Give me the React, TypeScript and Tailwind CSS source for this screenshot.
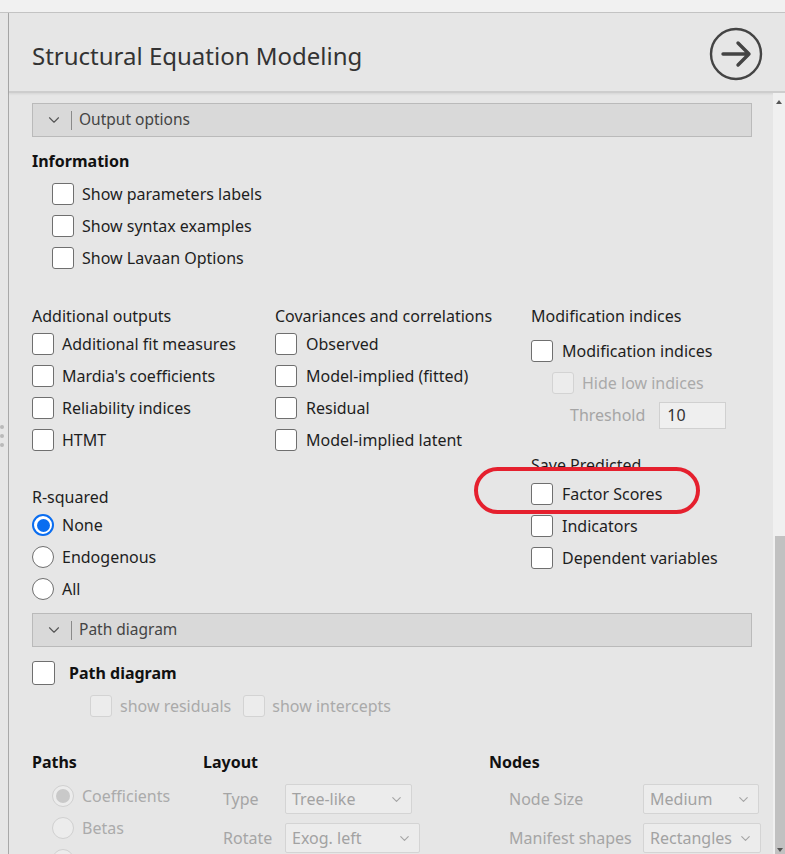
import { ChevronDown } from "lucide-react";

const font = { fontFamily: '"Noto Sans", "Open Sans", sans-serif' };

function Box({ disabled = false, big = false }: { disabled?: boolean; big?: boolean }) {
  return (
    <span
      className={`block shrink-0 rounded-[3px] border ${big ? "w-[23px] h-[24px]" : "w-[22px] h-[22px]"} ${
        disabled ? "border-[#d3d3d3] bg-[#ececec]" : "border-[#6f6f6f] bg-white"
      }`}
    />
  );
}

function Check({ label, disabled = false, gap = "gap-[8px]" }: { label: string; disabled?: boolean; gap?: string }) {
  return (
    <div className={`flex items-center h-[32px] ${gap}`}>
      <Box disabled={disabled} />
      <span className={`text-[16px] leading-none ${disabled ? "text-[#aaaaaa]" : "text-[#1e1e1e]"}`}>{label}</span>
    </div>
  );
}

function Radio({ label, checked = false, disabled = false }: { label: string; checked?: boolean; disabled?: boolean }) {
  return (
    <div className="flex items-center h-[32px] gap-[8px]">
      {checked ? (
        <span className="w-[22px] h-[22px] rounded-full border-2 border-[#0a6df0] bg-white flex items-center justify-center">
          <span className="w-[13px] h-[13px] rounded-full bg-[#0a6df0]" />
        </span>
      ) : disabled ? (
        <span className="w-[22px] h-[22px] rounded-full border border-[#d0d0d0] bg-[#ececec] flex items-center justify-center">
          {label === "Coefficients" && <span className="w-[14px] h-[14px] rounded-full bg-[#c9c9c9]" />}
        </span>
      ) : (
        <span className="w-[22px] h-[22px] rounded-full border border-[#6f6f6f] bg-white" />
      )}
      <span className={`text-[16px] leading-none ${disabled ? "text-[#ababab]" : "text-[#1e1e1e]"}`}>{label}</span>
    </div>
  );
}

function Section({ title }: { title: string }) {
  return (
    <div className="h-[34px] w-[720px] bg-[#d9d9d9] border border-[#bababa] flex items-center">
      <ChevronDown size={18} strokeWidth={1.5} className="ml-[12px] text-[#555]" />
      <span className="ml-[8px] w-px h-[19px] bg-[#8a8a8a]" />
      <span className="ml-[7px] text-[15.5px] text-[#444]">{title}</span>
    </div>
  );
}

function Select({ value, width }: { value: string; width: string }) {
  return (
    <div className={`${width} h-[30px] border border-[#d4d4d4] bg-[#ececec] rounded-[2px] flex items-center justify-between pl-[6px] pr-[7px]`}>
      <span className="text-[16px] text-[#a2a2a2]">{value}</span>
      <ChevronDown size={15} strokeWidth={1.8} className="text-[#a5a5a5]" />
    </div>
  );
}

export default function App() {
  return (
    <div className="relative w-[785px] h-[854px] overflow-hidden bg-[#e6e6e6]" style={font}>
      <div className="h-[13px] bg-[#f1f1f1] border-b border-[#c4c4c4]" />

      <div className="flex h-[841px]">
        {/* drag grip */}
        <div className="w-[8px] flex flex-col items-start pt-[412px] gap-[5px]">
          <span className="w-[4px] h-[4px] rounded-full bg-[#b9b9b9]" />
          <span className="w-[4px] h-[4px] rounded-full bg-[#b9b9b9]" />
          <span className="w-[4px] h-[4px] rounded-full bg-[#b9b9b9]" />
        </div>

        <div className="flex-1 flex flex-col border-l border-[#a8a8a8] min-w-0">
          {/* header */}
          <div className="h-[80px] shrink-0 flex items-center justify-between pl-[23px] pr-[22px] border-b-2 border-[#cdcdcd] shadow-[0_1px_2px_rgba(0,0,0,0.08)]">
            <h1 className="text-[24px] font-normal text-[#333] pt-[7px]">Structural Equation Modeling</h1>
            <svg width="54" height="54" viewBox="0 0 54 54" className="mt-[3px]">
              <circle cx="27" cy="27" r="25" fill="none" stroke="#444" strokeWidth="2.4" />
              <path d="M14 27h26M29 16l11 11-11 11" fill="none" stroke="#444" strokeWidth="3.4" strokeLinecap="round" strokeLinejoin="round" />
            </svg>
          </div>

          <div className="flex-1 flex min-h-0">
            <div className="flex-1 pl-[23px] pt-[10px]">
              <Section title="Output options" />

              <div className="mt-[12px] text-[16px] font-bold text-[#111] leading-[24px]">Information</div>
              <div className="pl-[20px] mt-[5px]">
                <Check label="Show parameters labels" />
                <Check label="Show syntax examples" />
                <Check label="Show Lavaan Options" />
              </div>

              <div className="flex mt-[30px]">
                <div className="w-[499px]">
                  <div className="flex">
                    <div className="w-[243px]">
                      <div className="text-[16px] leading-[24px] text-[#1e1e1e]">Additional outputs</div>
                      <Check label="Additional fit measures" />
                      <Check label="Mardia's coefficients" />
                      <Check label="Reliability indices" />
                      <Check label="HTMT" />
                    </div>
                    <div>
                      <div className="text-[16px] leading-[24px] text-[#1e1e1e]">Covariances and correlations</div>
                      <Check label="Observed" gap="gap-[9px]" />
                      <Check label="Model-implied (fitted)" gap="gap-[9px]" />
                      <Check label="Residual" gap="gap-[9px]" />
                      <Check label="Model-implied latent" gap="gap-[9px]" />
                    </div>
                  </div>
                  <div className="mt-[29px]">
                    <div className="text-[16px] leading-[24px] text-[#1e1e1e]">R-squared</div>
                    <Radio label="None" checked />
                    <Radio label="Endogenous" />
                    <Radio label="All" />
                  </div>
                </div>

                <div>
                  <div className="text-[16px] leading-[24px] text-[#1e1e1e]">Modification indices</div>
                  <div className="mt-[7px]">
                    <Check label="Modification indices" gap="gap-[9px]" />
                  </div>
                  <div className="pl-[21px]">
                    <Check label="Hide low indices" disabled />
                  </div>
                  <div className="flex items-center h-[32px] pl-[39px]">
                    <span className="text-[16px] text-[#a5a5a5]">Threshold</span>
                    <span className="ml-[14px] w-[67px] h-[27px] border border-[#d0d0d0] bg-[#efefef] text-[16px] text-[#333] pl-[7px] leading-[25px]">10</span>
                  </div>
                  <div className="mt-[22px] text-[16px] leading-[24px] text-[#1e1e1e]">Save Predicted</div>
                  <div className="mt-[1px]">
                    <Check label="Factor Scores" gap="gap-[9px]" />
                    <Check label="Indicators" gap="gap-[9px]" />
                    <Check label="Dependent variables" gap="gap-[9px]" />
                  </div>
                </div>
              </div>

              <div className="mt-[8px]">
                <Section title="Path diagram" />
              </div>

              <div className="flex items-center h-[32px] mt-[10px] gap-[14px]">
                <Box big />
                <span className="text-[16px] font-bold text-[#111]">Path diagram</span>
              </div>
              <div className="flex items-center h-[32px] mt-[1px] pl-[58px]">
                <Box disabled />
                <span className="ml-[8px] text-[16px] text-[#aaaaaa]">show residuals</span>
                <span className="ml-[12px]"><Box disabled /></span>
                <span className="ml-[7px] text-[16px] text-[#aaaaaa]">show intercepts</span>
              </div>

              <div className="flex mt-[28px]">
                <div className="w-[171px]">
                  <div className="text-[16px] font-bold leading-[24px] text-[#111]">Paths</div>
                  <div className="pl-[20px] mt-[6px]">
                    <Radio label="Coefficients" disabled />
                    <Radio label="Betas" disabled />
                    <Radio label="Labels" disabled />
                  </div>
                </div>
                <div className="w-[286px]">
                  <div className="text-[16px] font-bold leading-[24px] text-[#111]">Layout</div>
                  <div className="pl-[20px] mt-[10px] flex flex-col gap-[9px]">
                    <div className="flex items-center">
                      <span className="w-[62px] text-[16px] text-[#a5a5a5]">Type</span>
                      <Select value="Tree-like" width="w-[127px]" />
                    </div>
                    <div className="flex items-center">
                      <span className="w-[62px] text-[16px] text-[#a5a5a5]">Rotate</span>
                      <Select value="Exog. left" width="w-[135px]" />
                    </div>
                  </div>
                </div>
                <div>
                  <div className="text-[16px] font-bold leading-[24px] text-[#111]">Nodes</div>
                  <div className="pl-[20px] mt-[10px] flex flex-col gap-[9px]">
                    <div className="flex items-center">
                      <span className="w-[134px] text-[16px] text-[#a5a5a5]">Node Size</span>
                      <Select value="Medium" width="w-[116px]" />
                    </div>
                    <div className="flex items-center">
                      <span className="w-[134px] text-[16px] text-[#a5a5a5]">Manifest shapes</span>
                      <Select value="Rectangles" width="w-[118px]" />
                    </div>
                  </div>
                </div>
              </div>
            </div>

            {/* scrollbar */}
            <div className="w-[12px] shrink-0 bg-[#f0f0f0] flex flex-col items-center">
              <span className="mt-[7px] w-0 h-0 border-l-[3px] border-r-[3px] border-b-[4px] border-l-transparent border-r-transparent border-b-[#555]" />
              <div className="mt-[432px] ml-[2px] w-[10px] flex-1 bg-[#c1c1c1] flex flex-col justify-end items-center pb-[2px]">
                <span className="w-0 h-0 border-l-[3px] border-r-[3px] border-t-[4px] border-l-transparent border-r-transparent border-t-[#555]" />
              </div>
            </div>
          </div>
        </div>
      </div>

      {/* red annotation ring */}
      <div className="absolute left-[474px] top-[467px] w-[226px] h-[47px] rounded-[24px] border-4 border-[#e5202e]" />
    </div>
  );
}
